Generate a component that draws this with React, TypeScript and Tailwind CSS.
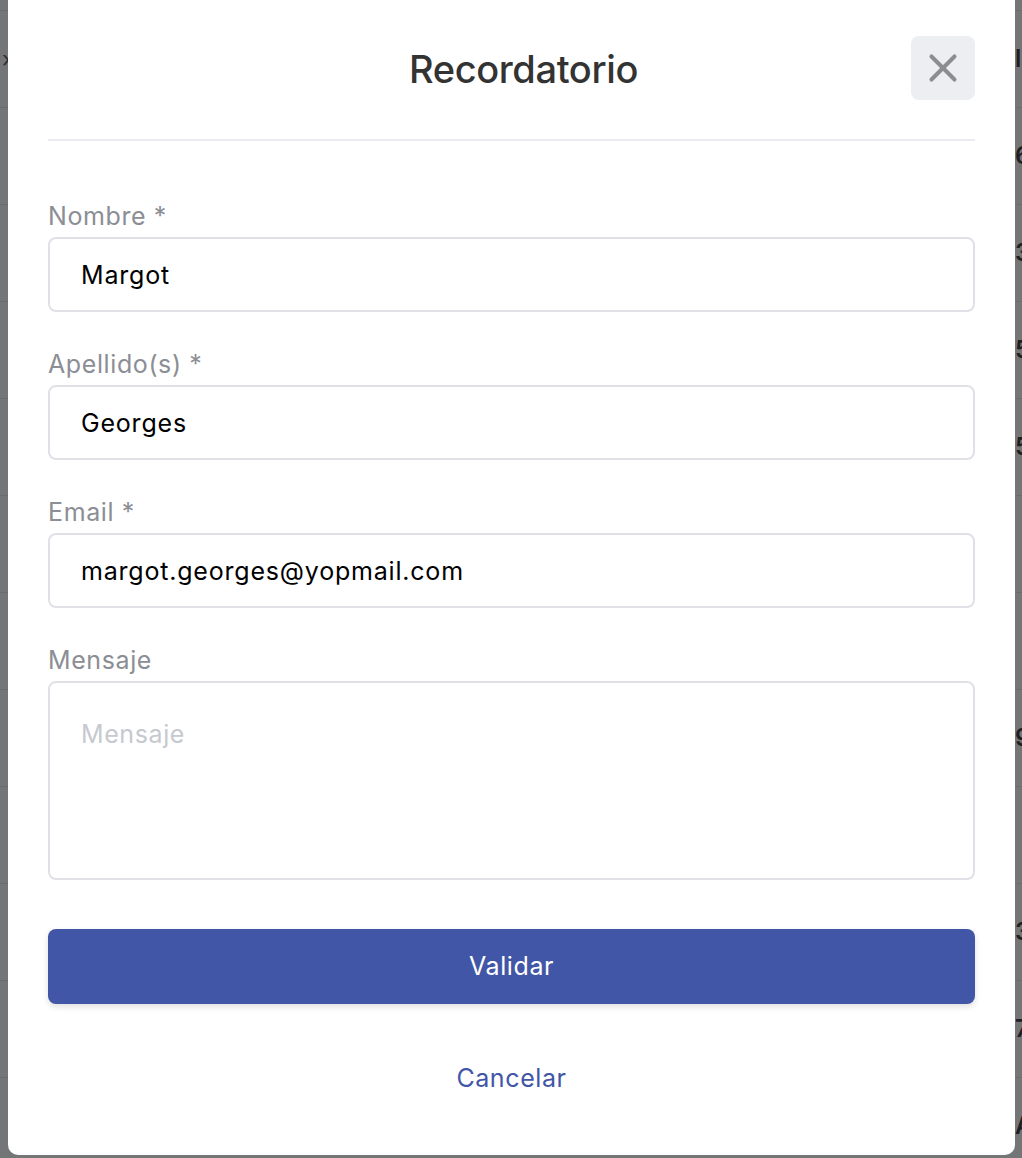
import { X } from 'lucide-react'

const rows = ['l', '6', '3', '5', '5', '', '', '9', '', '3', '7', 'A']

function Field({ label, value, area }: { label: string; value?: string; area?: boolean }) {
  return (
    <div className="flex flex-col">
      <label className="text-[25px] leading-8 tracking-[0.6px] text-[#8b8e94]">{label}</label>
      {area ? (
        <textarea
          placeholder={label}
          className="mt-[5px] h-[199px] resize-none rounded-lg border-2 border-[#dfe1e6] px-[31px] pt-[35px] text-[25px] leading-8 tracking-[0.6px] text-black outline-none placeholder:text-[#c6c9cf]"
        />
      ) : (
        <input
          defaultValue={value}
          className="mt-[5px] h-[75px] rounded-lg border-2 border-[#dfe1e6] px-[31px] text-[25px] tracking-[0.8px] text-black outline-none"
        />
      )}
    </div>
  )
}

export default function App() {
  return (
    <div
      className="relative h-[1158px] w-full overflow-hidden bg-[#747577]"
      style={{ fontFamily: 'Inter, "Liberation Sans", sans-serif' }}
    >
      {/* table behind the overlay */}
      <div className="flex flex-col pt-[10px]">
        {rows.map((c, i) => (
          <div key={i} className="flex h-[97px] items-center justify-between border-t border-[#6a6b6d]">
            <span className="pl-[2px] text-[22px] text-[#2c2e33]">{i === 0 ? '›' : ''}</span>
            <span className="w-[7px] overflow-hidden text-[24px] font-semibold leading-none text-[#1f2024]">{c}</span>
          </div>
        ))}
      </div>

      {/* modal */}
      <div className="absolute -top-[10px] left-[8px] flex h-[1165px] w-[1007px] flex-col rounded-[10px] bg-white px-[40px]">
        <div className="relative flex h-[151px] items-center justify-center border-b-2 border-[#ececf0] pl-[24px] pt-[10px]">
          <h1 className="text-[38px] font-medium tracking-[-0.01em] text-[#333333]">Recordatorio</h1>
          <button className="absolute right-0 top-[46px] flex h-16 w-16 items-center justify-center rounded-lg bg-[#eceef1]">
            <X className="h-[46px] w-[46px] text-[#8a8d92]" strokeWidth={2.1} />
          </button>
        </div>

        <div className="mt-[59px] flex flex-col gap-[36px]">
          <Field label="Nombre *" value="Margot" />
          <Field label="Apellido(s) *" value="Georges" />
          <Field label="Email *" value="margot.georges@yopmail.com" />
          <Field label="Mensaje" area />
        </div>

        <button className="mt-[49px] h-[75px] w-full rounded-lg bg-[#4156a6] text-[25px] tracking-[0.6px] text-white shadow-[0_3px_6px_rgba(0,0,0,0.12)]">
          Validar
        </button>
        <button className="mt-[56px] self-center text-[25px] tracking-[0.6px] text-[#4156a6]">Cancelar</button>
      </div>
    </div>
  )
}
